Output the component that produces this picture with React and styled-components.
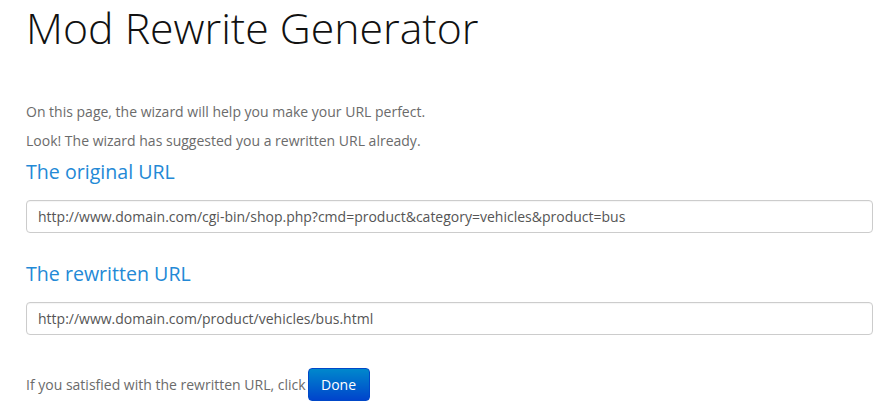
import React from "react";
import styled, { createGlobalStyle } from "styled-components";

const Global = createGlobalStyle`
  html, body { margin: 0; padding: 0; background: #fff; }
  body { font-family: "Open Sans", "Liberation Sans", sans-serif; }
`;

const Page = styled.main`
  padding: 0 12px 0 26px;
  display: flex;
  flex-direction: column;
  align-items: stretch;
`;

const Title = styled.h1`
  margin: 2px 0 0 0;
  font-weight: 300;
  font-size: 42.8px;
  line-height: 52px;
  color: #111;
`;

const Text = styled.p`
  margin: ${(p) => p.$mt || 0}px 0 0 0;
  font-size: 14px;
  line-height: 20px;
  color: #6b6b6b;
`;

const SectionTitle = styled.h2`
  margin: ${(p) => p.$mt || 0}px 0 0 0;
  font-size: 19.6px;
  font-weight: 400;
  line-height: 28px;
  color: #2389d6;
`;

const Field = styled.input`
  box-sizing: border-box;
  margin-top: ${(p) => p.$mt || 0}px;
  width: 100%;
  height: 33px;
  padding: 0 11px;
  border: 1px solid #cccccc;
  border-radius: 4px;
  font-family: inherit;
  font-size: 14px;
  color: #555;
  background: #fff;
  box-shadow: inset 0 1px 1px rgba(0, 0, 0, 0.04);
  outline: none;
`;

const Footer = styled.div`
  display: flex;
  align-items: center;
  gap: 2px;
  margin-top: 33px;
`;

const FooterText = styled.span`
  font-size: 14px;
  line-height: 20px;
  color: #6b6b6b;
`;

const DoneButton = styled.button`
  width: 62px;
  height: 33px;
  border: 1px solid #0048c8;
  border-radius: 4px;
  background: linear-gradient(to bottom, #0088cc, #0044cc);
  color: #fff;
  font-family: inherit;
  font-size: 14px;
  padding: 0;
  cursor: pointer;
`;

export default function App() {
  return (
    <>
      <Global />
      <Page>
        <Title>Mod Rewrite Generator</Title>
        <Text $mt={48}>On this page, the wizard will help you make your URL perfect.</Text>
        <Text $mt={9}>Look! The wizard has suggested you a rewritten URL already.</Text>
        <SectionTitle $mt={7}>The original URL</SectionTitle>
        <Field
          $mt={14}
          readOnly
          value="http://www.domain.com/cgi-bin/shop.php?cmd=product&category=vehicles&product=bus"
        />
        <SectionTitle $mt={27}>The rewritten URL</SectionTitle>
        <Field $mt={14} readOnly value="http://www.domain.com/product/vehicles/bus.html" />
        <Footer>
          <FooterText>If you satisfied with the rewritten URL, click</FooterText>
          <DoneButton>Done</DoneButton>
        </Footer>
      </Page>
    </>
  );
}
